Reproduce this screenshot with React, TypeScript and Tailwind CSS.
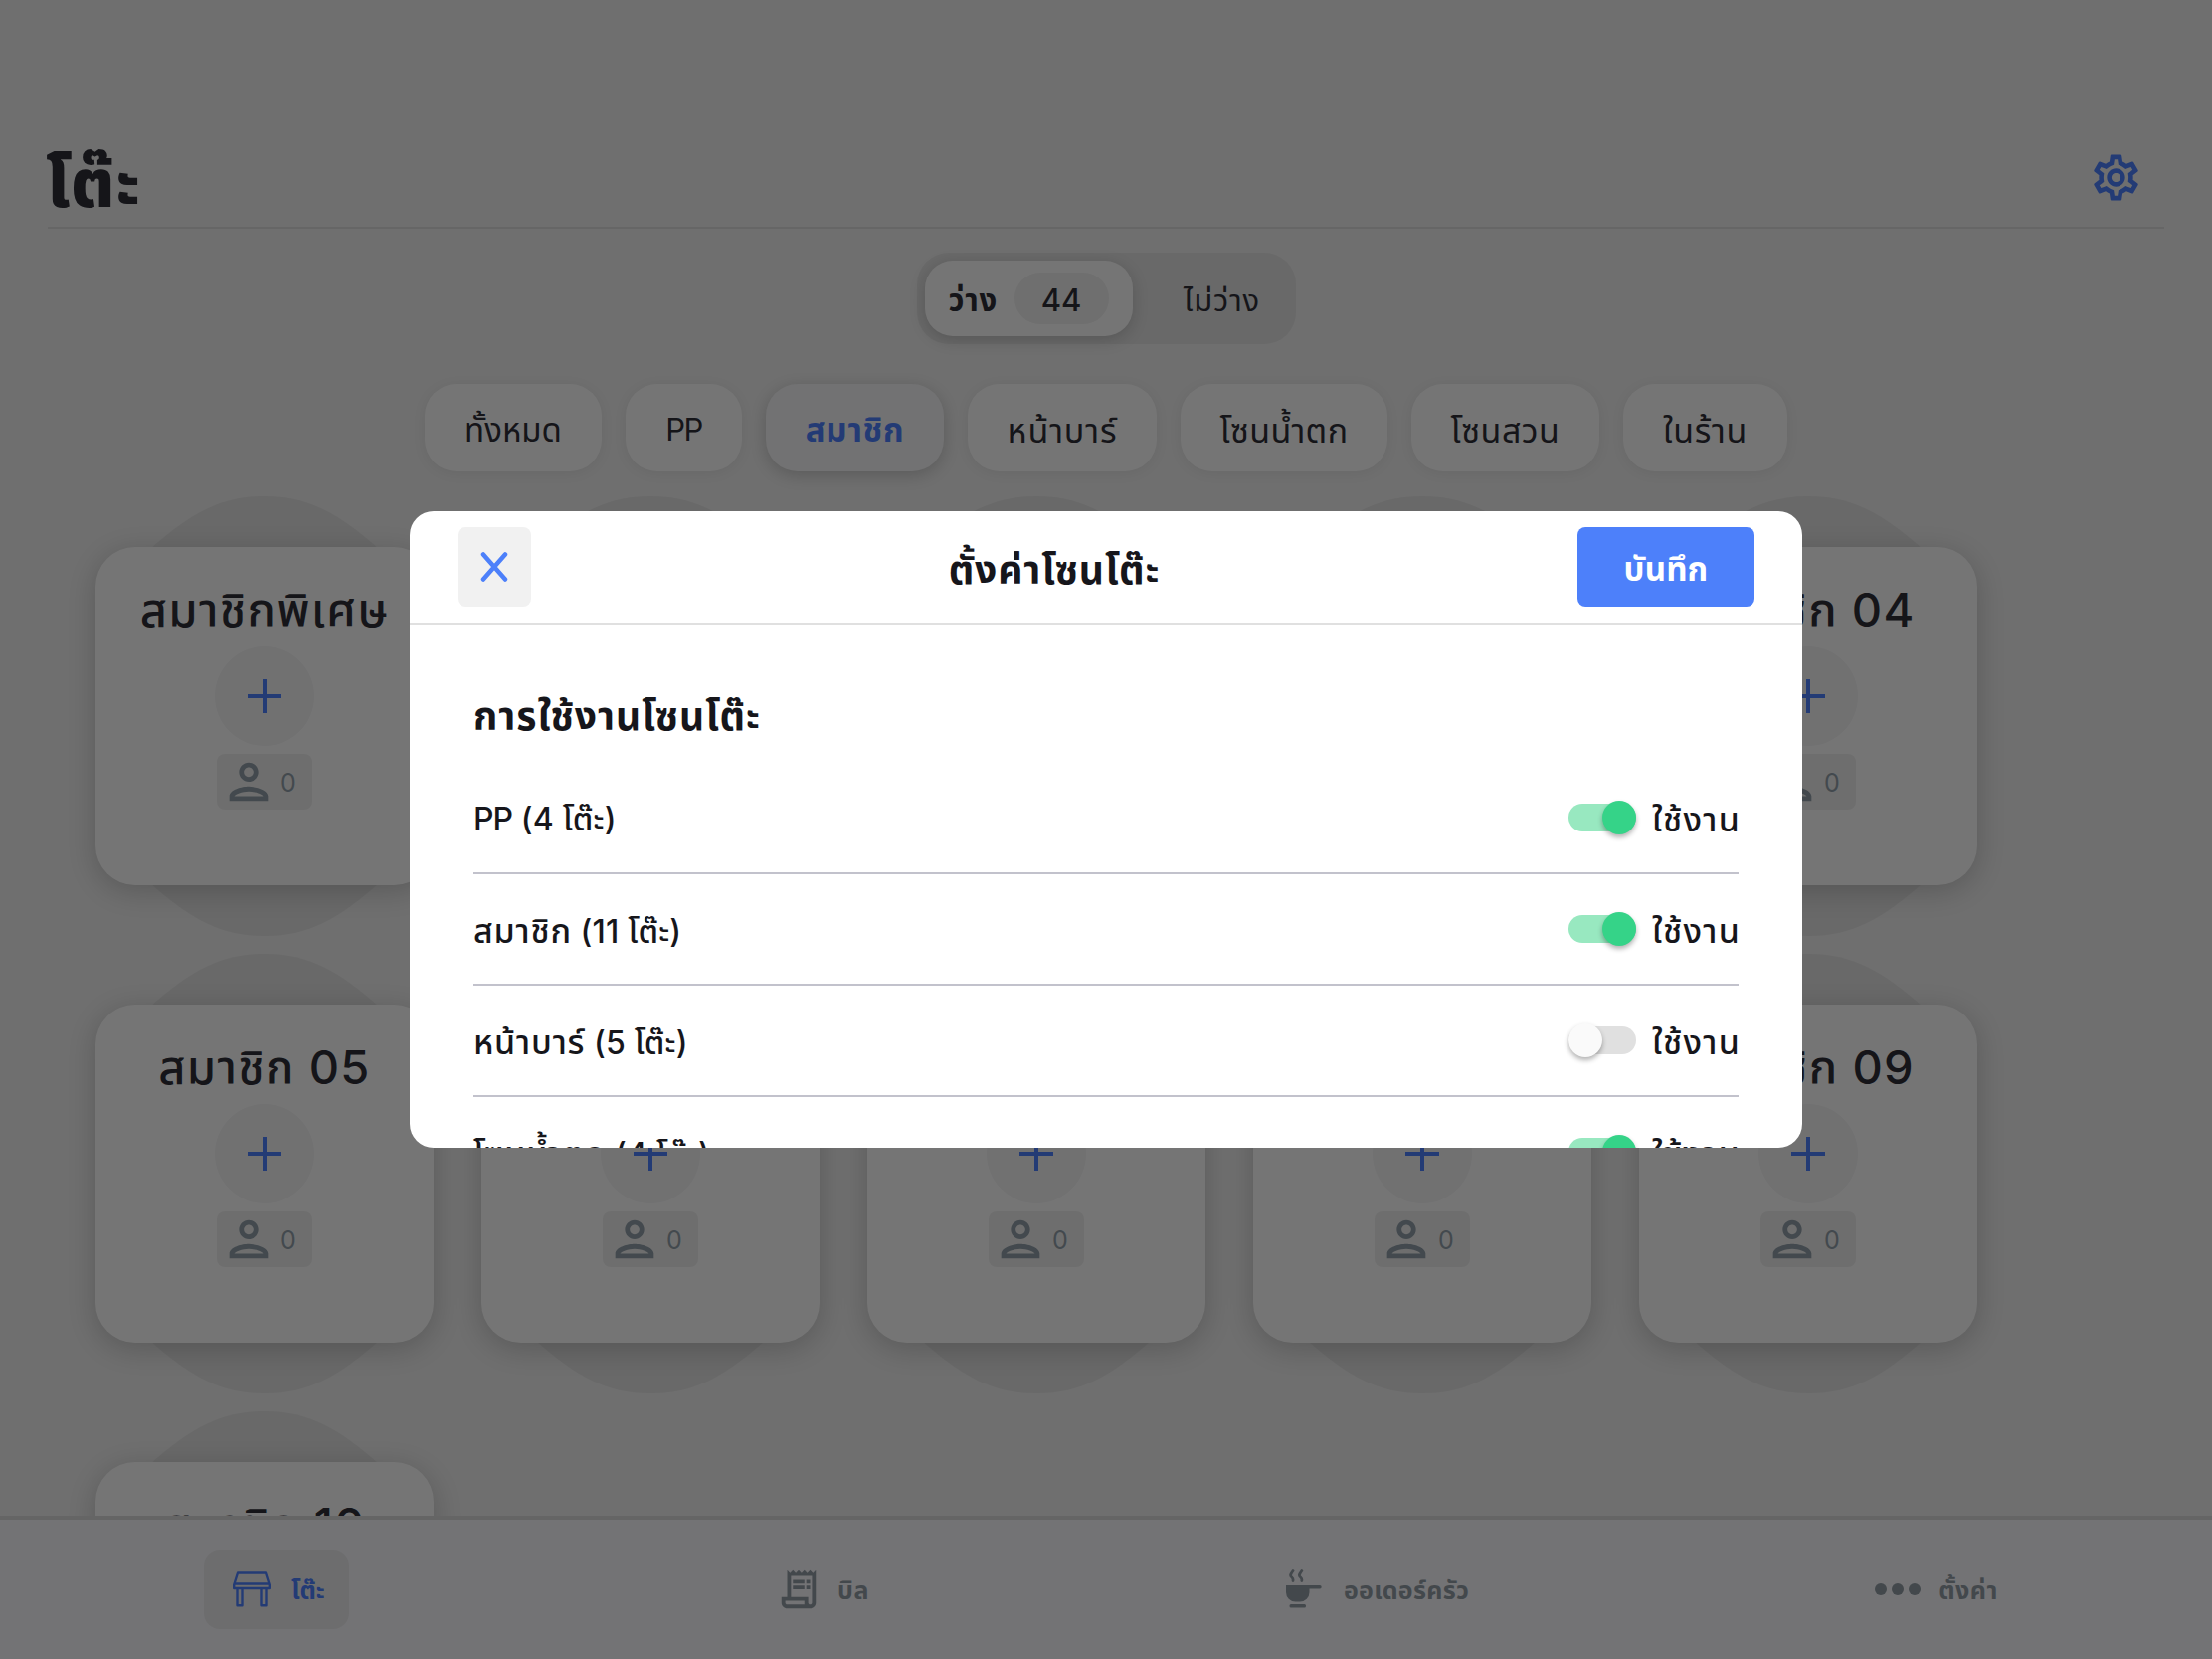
import React, { useState } from 'react';
import { MdOutlineSettings, MdOutlinePerson, MdOutlineReceiptLong } from 'react-icons/md';

interface Zone {
  name: string;
  tables: number;
  enabled: boolean;
}

const INITIAL_ZONES: Zone[] = [
  { name: 'PP', tables: 4, enabled: true },
  { name: 'สมาชิก', tables: 11, enabled: true },
  { name: 'หน้าบาร์', tables: 5, enabled: false },
  { name: 'โซนน้ำตก', tables: 4, enabled: true },
];

const FILTERS = [
  { label: 'ทั้งหมด', style: 'w-[178px] text-[33px]' },
  { label: 'PP', style: 'w-[117px] text-[31px] tracking-[-1.5px]' },
  { label: 'สมาชิก', style: 'w-[179px] text-[33px] tracking-[0.7px]' },
  { label: 'หน้าบาร์', style: 'w-[190px] text-[34px] tracking-[0.9px]' },
  { label: 'โซนน้ำตก', style: 'w-[208px] text-[34px] tracking-[0.4px]' },
  { label: 'โซนสวน', style: 'w-[189px] text-[34px] tracking-[0.5px]' },
  { label: 'ในร้าน', style: 'w-[165px] text-[34px] tracking-[0.7px]' },
];

const TABLES = [
  'สมาชิกพิเศษ',
  'สมาชิก 01',
  'สมาชิก 02',
  'สมาชิก 03',
  'สมาชิก 04',
  'สมาชิก 05',
  'สมาชิก 06',
  'สมาชิก 07',
  'สมาชิก 08',
  'สมาชิก 09',
  'สมาชิก 10',
];

const TableIcon = () => (
  <svg width="38" height="36" viewBox="0 0 38 36" fill="none" stroke="currentColor" strokeWidth="2.4" strokeLinejoin="round">
    <path d="M5 1.5h28l3.800 12v3.500H1.200v-3.500z" />
    <path d="M1.500 12.500h35" />
    <path d="M4.500 17v17.300h5V17M28.500 17v17.300h5V17" />
  </svg>
);

const PotIcon = () => (
  <svg width="36" height="40" viewBox="0 0 36 40" fill="currentColor">
    <path d="M0 16h34a1.700 1.700 0 0 1 0 3.400H23.500V23a9.500 9.500 0 0 1-9.500 9.500H9.500A9.500 9.500 0 0 1 0 23z" />
    <rect x="3.500" y="35" width="16.500" height="3.400" rx="1.500" />
    <path
      d="M7 1.500c-3 4-3 5-1.200 6.500s1.200 2.500 1.200 3.500M15.800 1.500c-3 4-3 5-1.200 6.500s1.200 2.500 1.200 3.500"
      fill="none"
      stroke="currentColor"
      strokeWidth="2.800"
      strokeLinecap="round"
    />
  </svg>
);

const DotsIcon = () => (
  <div className="flex gap-[5px]">
    <span className="size-3 rounded-full bg-current" />
    <span className="size-3 rounded-full bg-current" />
    <span className="size-3 rounded-full bg-current" />
  </div>
);

const TableCard = ({ name }: { name: string }) => (
  <div className="relative h-[340px] w-[340px] shrink-0">
    {/* Chairs above and below the table */}
    <svg className="absolute -top-[51px] left-0" width="340" height="442" viewBox="0 0 340 442" fill="#e4e4e4">
      <path d="M56 52C95 18 125 0 170 0s75 18 114 52v338c-39 34-69 52-114 52s-75-18-114-52z" />
    </svg>
    <div className="relative flex h-full flex-col items-center rounded-[40px] bg-white pt-7 shadow-[0_6px_28px_rgba(0,0,0,0.19)]">
      <div className="h-[72px] whitespace-nowrap text-[47px] font-medium leading-[70px] tracking-[1.3px]">{name}</div>
      <div className="flex size-[100px] shrink-0 items-center justify-center rounded-full bg-[#f6f6f7] text-[#4d80ff]">
        <svg width="34" height="34" viewBox="0 0 34 34" stroke="currentColor" strokeWidth="4">
          <path d="M17 0v34M0 17h34" />
        </svg>
      </div>
      <div className="mt-2 flex h-14 w-24 items-center rounded-lg bg-[#f0f0f0] pl-[3px] text-[#92a0aa]">
        <MdOutlinePerson className="size-[58px] shrink-0" />
        <span className="ml-[3px] pt-1 text-[25px]">0</span>
      </div>
    </div>
  </div>
);

const Toggle = ({ on, onClick }: { on: boolean; onClick: () => void }) => (
  <button onClick={onClick} className={`flex h-[28px] w-[68px] items-center rounded-full ${on ? 'justify-end bg-[#98e8c0]' : 'justify-start bg-[#e0e0e0]'}`}>
    <span className={`size-[34px] shrink-0 rounded-full shadow-[0_3px_5px_rgba(0,0,0,0.3)] ${on ? 'bg-[#35d388]' : 'bg-[#fafafa]'}`} />
  </button>
);

export default function App() {
  const [zones, setZones] = useState<Zone[]>(INITIAL_ZONES);
  const [filter, setFilter] = useState('สมาชิก');
  const [open, setOpen] = useState(true);

  const toggleZone = (index: number) => {
    setZones(prev => prev.map((z, i) => (i === index ? { ...z, enabled: !z.enabled } : z)));
  };

  return (
    <div className="relative flex h-[1668px] w-[2224px] flex-col overflow-hidden bg-[#f1f1f1] font-['Inter','Noto_Sans_Thai','Noto_Sans',sans-serif] text-[#2e2e38]">
      {/* Page header */}
      <header className="mx-12 flex h-[230px] shrink-0 items-end justify-between border-b-2 border-[#dedede]">
        <h1 className="mb-[5px] -ml-0.5 text-[68px] font-extrabold leading-[80px] tracking-[1px]">โต๊ะ</h1>
        <MdOutlineSettings className="mr-[21px] mb-[22px] size-[55px] text-[#4d80ff]" />
      </header>

      {/* Free / occupied */}
      <div className="mt-6 flex justify-center">
        <div className="flex h-[92px] w-[381px] rounded-[32px] bg-[#e4e4e4] p-2">
          <div className="flex w-[209px] items-center rounded-[28px] bg-white pl-6 shadow-[0_4px_16px_rgba(0,0,0,0.17)]">
            <span className="w-[66px] pt-[5px] text-[31px] font-bold tracking-[0.8px]">ว่าง</span>
            <span className="flex h-[52px] w-[95px] items-center justify-center rounded-[26px] bg-[#f1f1f1] pt-[5px] text-[31px] font-medium">44</span>
          </div>
          <div className="flex flex-1 items-center justify-center pt-[5px] pl-6 text-[31px] tracking-[0.8px]">ไม่ว่าง</div>
        </div>
      </div>

      {/* Zone filter */}
      <div className="mt-10 flex justify-center gap-6">
        {FILTERS.map(f => (
          <button
            key={f.label}
            onClick={() => setFilter(f.label)}
            className={`flex h-[88px] items-center justify-center whitespace-nowrap rounded-[32px] pt-[5px] ${f.style} ${
              filter === f.label
                ? 'bg-[#f8f8fa] font-bold text-[#4d80ff] shadow-[0_4px_16px_rgba(0,0,0,0.18)]'
                : 'bg-white shadow-[0_2px_14px_rgba(0,0,0,0.06)]'
            }`}
          >
            {f.label}
          </button>
        ))}
      </div>

      {/* Tables */}
      <main className="min-h-0 flex-1 overflow-hidden">
        <div className="flex flex-wrap gap-x-12 gap-y-[120px] px-24 pt-[76px]">
          {TABLES.map(name => (
            <TableCard key={name} name={name} />
          ))}
        </div>
      </main>

      {/* Bottom navigation */}
      <nav className="grid h-[144px] shrink-0 grid-cols-4 items-center border-t-4 border-[#dcdcdc] bg-[#fafaff] text-[25px] font-bold text-[#929da5]">
        <div className="flex justify-center">
          <div className="flex h-20 w-[146px] items-center gap-[21px] rounded-2xl bg-[#eeeef0] pl-[29px] text-[#4d80ff]">
            <TableIcon />
            <span className="pt-[3px]">โต๊ะ</span>
          </div>
        </div>
        <div className="flex items-center justify-center gap-4 pr-3.5">
          <MdOutlineReceiptLong className="size-[46px]" />
          <span className="pt-[3px] tracking-[0.5px]">บิล</span>
        </div>
        <div className="flex items-center justify-center gap-[22px] pr-2.5">
          <PotIcon />
          <span className="pt-[3px] tracking-[0.3px]">ออเดอร์ครัว</span>
        </div>
        <div className="flex items-center justify-center gap-[18px] pl-0.5">
          <DotsIcon />
          <span className="pt-[3px] tracking-[0.5px]">ตั้งค่า</span>
        </div>
      </nav>

      {/* Zone settings dialog */}
      {open && (
        <div className="absolute inset-0 flex items-center justify-center bg-black/54">
          <div className="flex h-[640px] w-[1400px] flex-col overflow-hidden rounded-3xl bg-white text-[#16161b]">
            <div className="flex h-[114px] shrink-0 items-center justify-between border-b-2 border-[#e0e0e0] px-12">
              <button onClick={() => setOpen(false)} className="flex h-20 w-[74px] items-center justify-center rounded-lg bg-[#f1f1f1] text-[#4d80fa]">
                <svg width="28" height="32" viewBox="0 0 28 32" stroke="currentColor" strokeWidth="4.500" strokeLinecap="round">
                  <path d="M3 3.500l22 25M25 3.500L3 28.500" />
                </svg>
              </button>
              <h2 className="pt-1.5 text-[39px] font-bold tracking-[0.9px]">ตั้งค่าโซนโต๊ะ</h2>
              <button className="h-20 w-[178px] rounded-lg bg-[#4d80fa] pt-[5px] text-[33px] font-bold tracking-[0.2px] text-white">บันทึก</button>
            </div>
            <div className="flex-1 overflow-hidden px-16 pt-16">
              <h3 className="h-[75px] text-[39px] font-bold leading-[56px] tracking-[1px]">การใช้งานโซนโต๊ะ</h3>
              {zones.map((z, i) => (
                <div key={z.name} className="flex h-[112px] items-center border-b-2 border-[#c2c2cc] text-[32px] font-medium">
                  <span className="flex-1 pt-[3px]">
                    <span className={z.name === 'PP' ? 'tracking-[-1px]' : 'text-[34px] tracking-[0.8px]'}>{z.name}</span>
                    <span className="tracking-[0.2px]">{` (${z.tables} โต๊ะ)`}</span>
                  </span>
                  <Toggle on={z.enabled} onClick={() => toggleZone(i)} />
                  <span className="ml-4 w-[87px] whitespace-nowrap pt-[3px] text-[34px] tracking-[1.3px]">ใช้งาน</span>
                </div>
              ))}
            </div>
          </div>
        </div>
      )}
    </div>
  );
}
